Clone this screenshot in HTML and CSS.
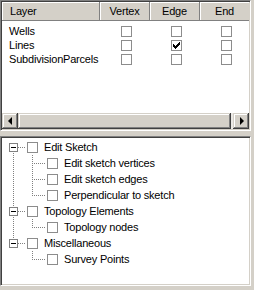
FILE: index.html
```html
<!DOCTYPE html>
<html>
<head>
<meta charset="utf-8">
<link rel="stylesheet" href="styles.css">
</head>
<body>
<div class="app">
  <div class="panel list-panel">
    <div class="lv">
      <div class="lv-head">
        <div class="hc c-layer">Layer</div>
        <div class="hc c-col">Vertex</div>
        <div class="hc c-col">Edge</div>
        <div class="hc c-col">End</div>
        <div class="hc c-rest"></div>
      </div>
      <div class="lv-body">
        <div class="lv-row">
          <div class="c-layer cell">Wells</div>
          <div class="c-col cell"><span class="cb"></span></div>
          <div class="c-col cell"><span class="cb"></span></div>
          <div class="c-col cell"><span class="cb"></span></div>
        </div>
        <div class="lv-row">
          <div class="c-layer cell">Lines</div>
          <div class="c-col cell"><span class="cb"></span></div>
          <div class="c-col cell"><span class="cb checked"><svg width="7" height="7" viewBox="0 0 7 7" shape-rendering="crispEdges"><path d="M6 0h1v1h-1zM5 1h2v1h-2zM0 2h1v1h-1zM4 2h3v1h-3zM0 3h2v1h-2zM3 3h3v1h-3zM0 4h5v1h-5zM1 5h3v1h-3zM2 6h1v1h-1z" fill="#000"/></svg></span></div>
          <div class="c-col cell"><span class="cb"></span></div>
        </div>
        <div class="lv-row">
          <div class="c-layer cell">SubdivisionParcels</div>
          <div class="c-col cell"><span class="cb"></span></div>
          <div class="c-col cell"><span class="cb"></span></div>
          <div class="c-col cell"><span class="cb"></span></div>
        </div>
      </div>
    </div>
    <div class="hscroll">
      <div class="sb-btn"><span class="arr-l"></span></div>
      <div class="sb-track"><div class="sb-thumb"></div></div>
      <div class="sb-btn"><span class="arr-r"></span></div>
    </div>
  </div>

  <div class="panel tree-panel">
    <div class="tree">
      <div class="node">
        <span class="g g-root root-first"><span class="exp"></span></span>
        <span class="cb tcb"></span><span class="lbl">Edit Sketch</span>
      </div>
      <div class="node">
        <span class="g g-pass pass"></span><span class="g g-leaf leaf-mid"></span>
        <span class="cb tcb"></span><span class="lbl">Edit sketch vertices</span>
      </div>
      <div class="node">
        <span class="g g-pass pass"></span><span class="g g-leaf leaf-mid"></span>
        <span class="cb tcb"></span><span class="lbl">Edit sketch edges</span>
      </div>
      <div class="node">
        <span class="g g-pass pass"></span><span class="g g-leaf leaf-last"></span>
        <span class="cb tcb"></span><span class="lbl">Perpendicular to sketch</span>
      </div>
      <div class="node">
        <span class="g g-root root-mid"><span class="exp"></span></span>
        <span class="cb tcb"></span><span class="lbl">Topology Elements</span>
      </div>
      <div class="node">
        <span class="g g-pass pass"></span><span class="g g-leaf leaf-last"></span>
        <span class="cb tcb"></span><span class="lbl">Topology nodes</span>
      </div>
      <div class="node">
        <span class="g g-root root-last"><span class="exp"></span></span>
        <span class="cb tcb"></span><span class="lbl">Miscellaneous</span>
      </div>
      <div class="node">
        <span class="g g-pass"></span><span class="g g-leaf leaf-last"></span>
        <span class="cb tcb"></span><span class="lbl">Survey Points</span>
      </div>
    </div>
  </div>
</div>
</body>
</html>
```

FILE: styles.css
```css
html, body {
  margin: 0;
  padding: 0;
  background: #d4d0c8;
}
body {
  width: 254px;
  height: 290px;
  overflow: hidden;
  font-family: "Liberation Sans", Arial, sans-serif;
  font-size: 11px;
  letter-spacing: -0.2px;
  color: #000;
}
.app {
  display: flex;
  flex-direction: column;
  gap: 5px;
  width: 251px;
}
.panel {
  box-sizing: border-box;
  border-style: solid;
  border-width: 1px;
  border-color: #808080 #fff #fff #808080;
  box-shadow: inset 1px 1px 0 #404040, inset -1px -1px 0 #d4d0c8;
  padding: 1px;
  background: #fff;
  display: flex;
  flex-direction: column;
  overflow: hidden;
}
.list-panel { height: 131px; }
.tree-panel { height: 150px; }

/* list view */
.lv { flex: 1; display: flex; flex-direction: column; overflow: hidden; }
.lv-head {
  display: flex;
  height: 19px;
  flex: none;
}
.hc {
  box-sizing: border-box;
  height: 19px;
  background: #d4d0c8;
  border-right: 1px solid #808080;
  border-bottom: 1px solid #808080;
  box-shadow: inset 1px 1px 0 #fff;
  display: flex;
  align-items: center;
  justify-content: center;
  padding-bottom: 1px;
}
.hc.c-layer { justify-content: flex-start; padding-left: 8px; }
.hc.c-rest { flex: 1; border-right: 0; }
.c-layer { width: 98px; flex: none; box-sizing: border-box; }
.c-col { width: 50px; flex: none; box-sizing: border-box; }
.lv-body { padding-top: 3px; }
.lv-row { display: flex; height: 14px; align-items: center; }
.cell.c-layer { padding-left: 7px; }
.cell.c-col { display: flex; justify-content: center; padding-left: 2px; }

.cb {
  box-sizing: border-box;
  width: 11px;
  height: 11px;
  border: 1px solid #8c8c8c;
  background: #fff;
  display: inline-flex;
  align-items: center;
  justify-content: center;
  flex: none;
}
.cb svg { display: block; }

/* scrollbar */
.hscroll {
  display: flex;
  height: 16px;
  flex: none;
  background: #ebe9e5;
}
.sb-btn, .sb-thumb {
  box-sizing: border-box;
  background: #d4d0c8;
  box-shadow: inset -1px -1px 0 #404040, inset 1px 1px 0 #d4d0c8, inset -2px -2px 0 #808080, inset 2px 2px 0 #fff;
}
.sb-btn {
  width: 16px;
  height: 16px;
  flex: none;
  display: flex;
  align-items: center;
  justify-content: center;
}
.sb-track { flex: 1; display: flex; padding-right: 2px; }
.sb-thumb { flex: 1; }
.arr-l {
  width: 0; height: 0;
  border-right: 4px solid #000;
  border-top: 4px solid transparent;
  border-bottom: 4px solid transparent;
  margin-right: 1px;
}
.arr-r {
  width: 0; height: 0;
  border-left: 4px solid #000;
  border-top: 4px solid transparent;
  border-bottom: 4px solid transparent;
  margin-left: 1px;
}

/* tree */
.tree { padding-top: 1px; }
.node { display: flex; align-items: center; height: 16px; }
.g {
  flex: none;
  height: 16px;
  box-sizing: border-box;
  background-repeat: no-repeat;
}
.g-root { width: 24px; display: flex; align-items: center; padding-left: 7px; }
.g-pass { width: 19px; }
.g-leaf { width: 25px; }
.tcb { margin-left: 1px; }
.lbl { margin-left: 6px; white-space: nowrap; }

.exp {
  box-sizing: border-box;
  width: 9px;
  height: 9px;
  border: 1px solid #808080;
  background: #fff;
  display: flex;
  align-items: center;
  justify-content: center;
}
.exp::after {
  content: "";
  width: 5px;
  height: 1px;
  background: #000;
}

.root-first {
  background-image:
    repeating-linear-gradient(to bottom, #808080 0 1px, transparent 1px 2px),
    repeating-linear-gradient(to right, #808080 0 1px, transparent 1px 2px);
  background-position: 11px 8px, 16px 8px;
  background-size: 1px 8px, 8px 1px;
}
.root-mid {
  background-image:
    repeating-linear-gradient(to bottom, #808080 0 1px, transparent 1px 2px),
    repeating-linear-gradient(to right, #808080 0 1px, transparent 1px 2px);
  background-position: 11px 0, 16px 8px;
  background-size: 1px 16px, 8px 1px;
}
.root-last {
  background-image:
    repeating-linear-gradient(to bottom, #808080 0 1px, transparent 1px 2px),
    repeating-linear-gradient(to right, #808080 0 1px, transparent 1px 2px);
  background-position: 11px 0, 16px 8px;
  background-size: 1px 8px, 8px 1px;
}
.pass {
  background-image: repeating-linear-gradient(to bottom, #808080 0 1px, transparent 1px 2px);
  background-position: 11px 0;
  background-size: 1px 16px;
}
.leaf-mid {
  background-image:
    repeating-linear-gradient(to bottom, #808080 0 1px, transparent 1px 2px),
    repeating-linear-gradient(to right, #808080 0 1px, transparent 1px 2px);
  background-position: 11px 0, 11px 8px;
  background-size: 1px 16px, 14px 1px;
}
.leaf-last {
  background-image:
    repeating-linear-gradient(to bottom, #808080 0 1px, transparent 1px 2px),
    repeating-linear-gradient(to right, #808080 0 1px, transparent 1px 2px);
  background-position: 11px 0, 11px 8px;
  background-size: 1px 9px, 14px 1px;
}
```
